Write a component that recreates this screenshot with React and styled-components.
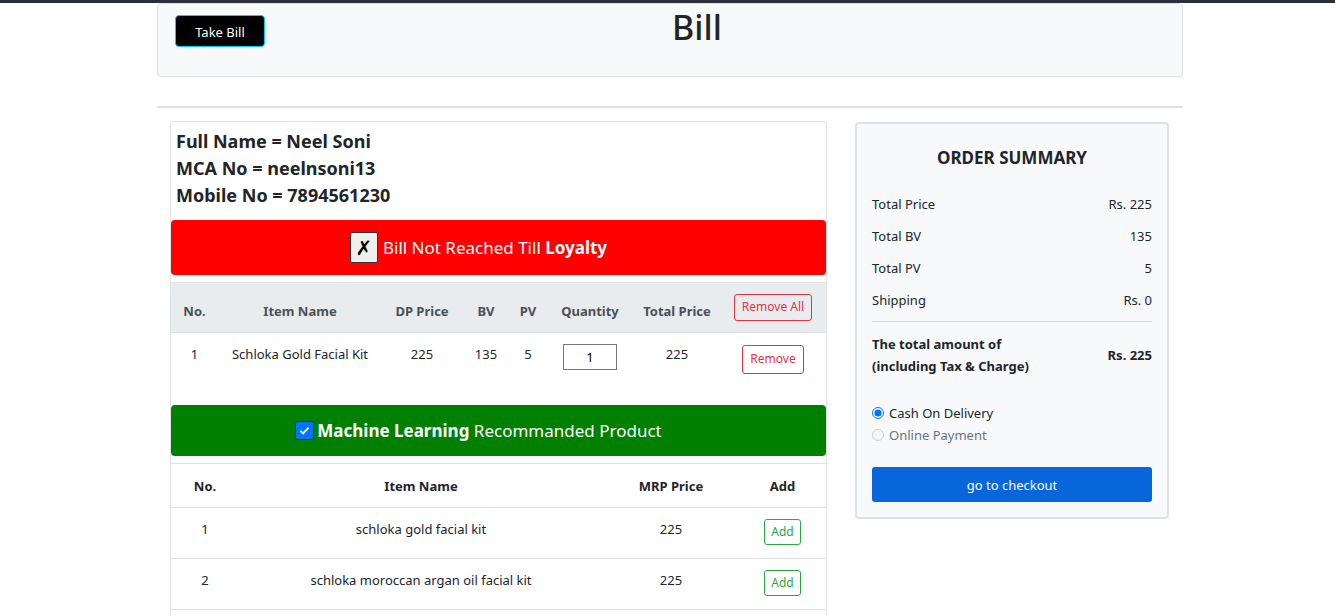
import React from 'react';
import styled, { createGlobalStyle } from 'styled-components';

const GlobalStyle = createGlobalStyle`
  body {
    margin: 0;
    font-family: "Noto Sans", "Open Sans", Arial, sans-serif;
    color: #212529;
    background: #fff;
    border-top: 3px solid #2c2f3b;
  }
  * { box-sizing: border-box; }
`;

const orderItems = [
  { no: 1, name: 'Schloka Gold Facial Kit', dp: 225, bv: 135, pv: 5, qty: 1, total: 225 },
];

const recommended = [
  { no: 1, name: 'schloka gold facial kit', mrp: 225 },
  { no: 2, name: 'schloka moroccan argan oil facial kit', mrp: 225 },
];

const summaryRows = [
  ['Total Price', 'Rs. 225'],
  ['Total BV', '135'],
  ['Total PV', '5'],
  ['Shipping', 'Rs. 0'],
];

const App = () => {
  return (
    <>
      <GlobalStyle />
      <Page>
        <HeaderCard>
          <TakeBillButton>Take Bill</TakeBillButton>
          <PageTitle>Bill</PageTitle>
        </HeaderCard>
        <Divider />
        <Row>
          <BillCard>
            <CustomerInfo>
              <div>Full Name = Neel Soni</div>
              <div>MCA No = neelnsoni13</div>
              <div>Mobile No = 7894561230</div>
            </CustomerInfo>

            <Banner color="#ff0000" $gap={5}>
              <CrossBox>✗</CrossBox>
              <span>Bill Not Reached Till <b>Loyalty</b></span>
            </Banner>

            <ItemTable>
              <colgroup>
                <col style={{ width: 47 }} />
                <col style={{ width: 164 }} />
                <col style={{ width: 80 }} />
                <col style={{ width: 48 }} />
                <col style={{ width: 36 }} />
                <col style={{ width: 88 }} />
                <col style={{ width: 86 }} />
                <col style={{ width: 106 }} />
              </colgroup>
              <thead>
                <HeadRow>
                  <Th>No.</Th>
                  <Th>Item Name</Th>
                  <Th>DP Price</Th>
                  <Th>BV</Th>
                  <Th>PV</Th>
                  <Th>Quantity</Th>
                  <Th>Total Price</Th>
                  <Th $button><OutlineButton color="#dc3545">Remove All</OutlineButton></Th>
                </HeadRow>
              </thead>
              <tbody>
                {orderItems.map((item) => (
                  <tr key={item.no}>
                    <Td>{item.no}</Td>
                    <Td>{item.name}</Td>
                    <Td>{item.dp}</Td>
                    <Td>{item.bv}</Td>
                    <Td>{item.pv}</Td>
                    <Td><QtyInput defaultValue={item.qty} /></Td>
                    <Td>{item.total}</Td>
                    <Td><OutlineButton color="#dc3545" $pad="5px 7px">Remove</OutlineButton></Td>
                  </tr>
                ))}
              </tbody>
            </ItemTable>

            <Banner color="#008000" $height={51} $top={20} $gap={3}>
              <CheckBox>
                <svg width="13" height="13" viewBox="0 0 13 13">
                  <path d="M2.5 6.8 L5.2 9.4 L10.6 3.6" stroke="#fff" strokeWidth="1.8" fill="none" />
                </svg>
              </CheckBox>
              <span><b>Machine Learning</b> Recommanded Product</span>
            </Banner>

            <RecTable>
              <colgroup>
                <col style={{ width: 68 }} />
                <col style={{ width: 364 }} />
                <col style={{ width: 136 }} />
                <col style={{ width: 87 }} />
              </colgroup>
              <thead>
                <tr>
                  <RecTh>No.</RecTh>
                  <RecTh>Item Name</RecTh>
                  <RecTh>MRP Price</RecTh>
                  <RecTh>Add</RecTh>
                </tr>
              </thead>
              <tbody>
                {recommended.map((r) => (
                  <tr key={r.no}>
                    <RecTd>{r.no}</RecTd>
                    <RecTd>{r.name}</RecTd>
                    <RecTd>{r.mrp}</RecTd>
                    <RecTd $pad="11px 0 0"><OutlineButton color="#28a745" $pad="4px 6px">Add</OutlineButton></RecTd>
                  </tr>
                ))}
              </tbody>
            </RecTable>
          </BillCard>

          <SummaryCard>
            <SummaryTitle>ORDER SUMMARY</SummaryTitle>
            {summaryRows.map(([label, value]) => (
              <SummaryRow key={label}>
                <span>{label}</span>
                <span>{value}</span>
              </SummaryRow>
            ))}
            <SummaryRule />
            <TotalRow>
              <div>The total amount of<br />(including Tax &amp; Charge)</div>
              <div>Rs. 225</div>
            </TotalRow>
            <PaymentGroup>
              <RadioLabel>
                <input type="radio" name="pay" defaultChecked />
                Cash On Delivery
              </RadioLabel>
              <RadioLabel $disabled>
                <input type="radio" name="pay" disabled />
                Online Payment
              </RadioLabel>
            </PaymentGroup>
            <CheckoutButton>go to checkout</CheckoutButton>
          </SummaryCard>
        </Row>
      </Page>
    </>
  );
};

export default App;

const Page = styled.div`
  width: 1026px;
  margin-left: calc(50% - 510.5px);
`;

const HeaderCard = styled.div`
  display: flex;
  align-items: flex-start;
  height: 74px;
  padding: 11px 17px;
  background: #f8f9fa;
  border: 1px solid #dee2e6;
  border-radius: 4px;
`;

const TakeBillButton = styled.button`
  width: 90px;
  height: 32px;
  padding-top: 3px;
  background: #000;
  color: #fff;
  border: 1px solid #0dcaf0;
  border-radius: 4px;
  font-family: inherit;
  font-size: 13px;
`;

const PageTitle = styled.h1`
  flex: 1;
  margin: -8px 36px 0 0;
  text-align: center;
  font-size: 34px;
  font-weight: 500;
  line-height: 1.2;
`;

const Divider = styled.hr`
  margin: 29px 0 13px;
  border: 0;
  border-top: 2px solid #dee2e6;
`;

const Row = styled.div`
  display: flex;
  align-items: flex-start;
  padding-left: 13px;
  gap: 28px;
`;

const BillCard = styled.div`
  width: 657px;
  min-height: 520px;
  border: 1px solid #dee2e6;
  border-bottom: 0;
  border-radius: 4px 4px 0 0;
`;

const CustomerInfo = styled.div`
  padding: 6px 5px 11px;
  font-size: 18px;
  font-weight: 700;
  line-height: 27px;
`;

const Banner = styled.div`
  display: flex;
  align-items: center;
  justify-content: center;
  gap: ${(p) => p.$gap}px;
  height: ${(p) => p.$height || 55}px;
  margin-top: ${(p) => p.$top || 0}px;
  padding-right: 40px;
  background: ${(p) => p.color};
  color: #fff;
  font-size: 17px;
  border-radius: 4px;
`;

const CrossBox = styled.span`
  display: inline-flex;
  align-items: center;
  justify-content: center;
  width: 28px;
  height: 31px;
  background: #efefef;
  border: 1px solid #333;
  border-radius: 2px;
  color: #000;
  font-size: 20px;
  font-family: "DejaVu Sans", sans-serif;
`;

const CheckBox = styled.span`
  display: inline-flex;
  align-items: center;
  justify-content: center;
  width: 19px;
  height: 19px;
  background: #0075ff;
  border: 1.5px solid #1b1b1b;
  border-radius: 2px;
`;

const ItemTable = styled.table`
  width: 100%;
  margin-top: 7px;
  border-collapse: collapse;
  table-layout: fixed;
  font-size: 13px;
  text-align: center;
`;

const HeadRow = styled.tr`
  background: #e9ecef;
  border-top: 1px solid #dee2e6;
  border-bottom: 1px solid #dee2e6;
`;

const Th = styled.th`
  height: 50px;
  padding: ${(p) => (p.$button ? '0 4px' : '6px 4px 0')};
  color: #495057;
  font-weight: 700;
  white-space: nowrap;
`;

const Td = styled.td`
  height: 52px;
  padding: 12px 2px 0;
  vertical-align: top;
  white-space: nowrap;
`;

const OutlineButton = styled.button`
  padding: ${(p) => p.$pad || '4px 7px'};
  background: transparent;
  color: ${(p) => p.color};
  border: 1px solid ${(p) => p.color};
  border-radius: 3px;
  font-family: inherit;
  font-size: 12px;
  line-height: 1.4;
`;

const QtyInput = styled.input`
  width: 54px;
  height: 26px;
  margin-top: -1px;
  border: 1px solid #767676;
  border-radius: 0;
  text-align: center;
  font-family: inherit;
  font-size: 13px;
`;

const RecTable = styled.table`
  width: 100%;
  margin-top: 7px;
  border-collapse: collapse;
  table-layout: fixed;
  font-size: 13px;
  text-align: center;
`;

const RecTh = styled.th`
  height: 44px;
  padding-top: 2px;
  border-top: 1px solid #dee2e6;
  border-bottom: 1px solid #dee2e6;
  font-weight: 700;
`;

const RecTd = styled.td`
  height: 51px;
  padding: ${(p) => p.$pad || '12px 0 0'};
  vertical-align: top;
  border-bottom: 1px solid #dee2e6;
`;

const SummaryCard = styled.div`
  width: 314px;
  margin-top: 1px;
  padding: 21px 15px 15px;
  background: #f8f9fa;
  border: 2px solid #dee2e6;
  border-radius: 4px;
  font-size: 13px;
`;

const SummaryTitle = styled.h5`
  margin: 0 0 22px;
  text-align: center;
  font-size: 17px;
  font-weight: 700;
  line-height: 26px;
`;

const SummaryRow = styled.div`
  display: flex;
  justify-content: space-between;
  height: 32px;
  line-height: 22px;
`;

const SummaryRule = styled.hr`
  margin: 0 0 11px;
  border: 0;
  border-top: 1px solid #d6d8db;
`;

const TotalRow = styled.div`
  display: flex;
  justify-content: space-between;
  align-items: center;
  font-weight: 700;
  line-height: 22px;
`;

const PaymentGroup = styled.div`
  margin-top: 25px;
  display: flex;
  flex-direction: column;
`;

const RadioLabel = styled.label`
  display: flex;
  align-items: center;
  gap: 5px;
  height: 22px;
  color: ${(p) => (p.$disabled ? '#6c757d' : '#212529')};

  input {
    margin: 0;
    width: 12px;
    height: 12px;
  }
`;

const CheckoutButton = styled.button`
  width: 100%;
  height: 35px;
  margin-top: 21px;
  background: #0866db;
  color: #fff;
  border: 0;
  border-radius: 3px;
  font-family: inherit;
  font-size: 13px;
`;
